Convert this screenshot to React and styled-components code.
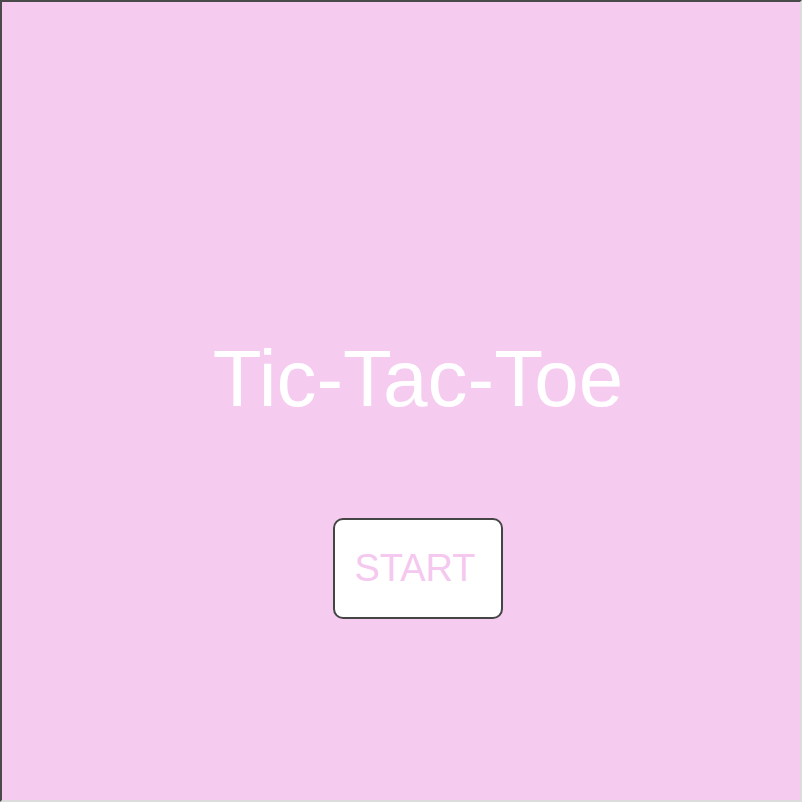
import React from "react"
import styled, { createGlobalStyle } from "styled-components"

const GlobalStyle = createGlobalStyle`
  html, body {
    margin: 0;
    padding: 0;
    background: #ffffff;
  }
  * {
    box-sizing: border-box;
  }
`

const Board = styled.div`
  width: 802px;
  height: 802px;
  background: #f5cbf0;
  border-style: solid;
  border-width: 2px;
  border-color: #4a4a4a #dcdcdc #dcdcdc #4a4a4a;
  display: flex;
  flex-direction: column;
  align-items: center;
  padding-top: 337px;
  padding-left: 34px;
  font-family: "Liberation Sans", Arial, sans-serif;
`

const Title = styled.h1`
  margin: 0;
  font-size: 80px;
  line-height: 80px;
  font-weight: normal;
  color: #ffffff;
`

const StartButton = styled.button`
  margin-top: 99px;
  width: 170px;
  height: 101px;
  background: #ffffff;
  border: 2px solid #454545;
  border-radius: 10px;
  font-family: inherit;
  font-size: 38px;
  line-height: 1;
  color: #f5c8ef;
  padding: 0 6px 2px 0;
  cursor: pointer;
`

export default function App() {
  return (
    <>
      <GlobalStyle />
      <Board>
        <Title>Tic-Tac-Toe</Title>
        <StartButton>START</StartButton>
      </Board>
    </>
  )
}
